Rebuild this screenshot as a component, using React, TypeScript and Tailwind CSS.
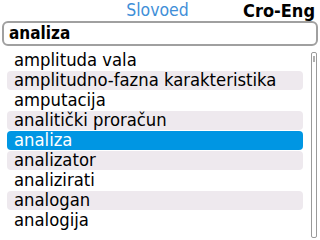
import React from 'react';

const words = [
  'amplituda vala',
  'amplitudno-fazna karakteristika',
  'amputacija',
  'analitički proračun',
  'analiza',
  'analizator',
  'analizirati',
  'analogan',
  'analogija',
];

export default function App() {
  const selected = 4;

  return (
    <div className="w-[320px] h-[240px] bg-white overflow-hidden font-['DejaVu_Sans_Condensed','DejaVu_Sans',sans-serif]">
      {/* header */}
      <div className="h-[21px] grid grid-cols-[1fr_auto_1fr] items-center pr-[5px] pt-[1px]">
        <span />
        <span className="text-[17.5px] text-[#3f8fd8] leading-none">Slovoed</span>
        <span className="justify-self-end text-[18px] font-bold text-black leading-none">Cro-Eng</span>
      </div>

      {/* search box */}
      <div className="mx-[2px] h-[25px] border-2 border-[#a0a0a0] rounded-[6px] flex items-center px-[5px]">
        <span className="text-[17px] font-bold text-black leading-none">analiza</span>
      </div>

      {/* list */}
      <div className="flex mt-[5px]">
        <div className="flex-1 flex flex-col gap-[1px] pl-[7px] pr-[8px]">
          {words.map((w, i) => (
            <div
              key={w}
              className={`h-[19px] rounded-[4px] pl-[7px] flex items-center text-[18.3px] leading-none whitespace-nowrap ${
                i === selected
                  ? 'bg-[#0096e3] text-white'
                  : i % 2 === 1
                  ? 'bg-[#eee9ee] text-black'
                  : 'text-black'
              }`}
            >
              {w}
            </div>
          ))}
        </div>
        <div className="w-[6px] mr-[3px] mt-[1px] h-[186px] border border-[#9a9a9a] rounded-[2px] flex flex-col items-center pt-[3px]">
          <div className="w-[2px] h-[6px] bg-[#b0b0b0]" />
        </div>
      </div>
    </div>
  );
}
